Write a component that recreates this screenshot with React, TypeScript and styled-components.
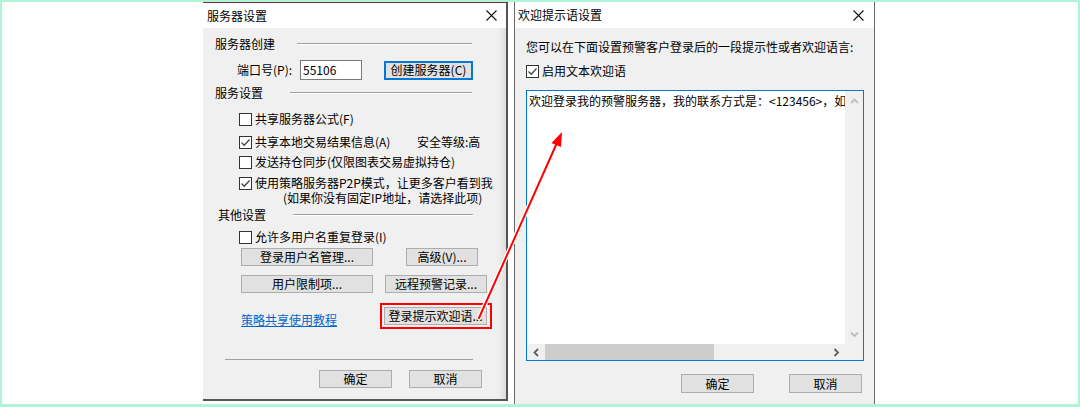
import styled, { createGlobalStyle } from "styled-components";

const GlobalStyle = createGlobalStyle`
  html, body {
    margin: 0;
    padding: 0;
    background: #ffffff;
  }
  body {
    font-family: "Noto Sans CJK SC", "Noto Sans", sans-serif;
    font-size: 12px;
    color: #000;
  }
`;

const Frame = styled.div`
  position: relative;
  width: 1080px;
  height: 407px;
  box-sizing: border-box;
  border: 2px solid #aef4d6;
  border-bottom-width: 3px;
  background: #ffffff;
  display: flex;
  align-items: flex-start;
  gap: 6px;
  padding-left: 201px;
  overflow: hidden;
`;

const Dialog = styled.div<{ $w: number; $h: number; $side: "left" | "right" }>`
  width: ${(p) => p.$w}px;
  height: ${(p) => p.$h}px;
  box-sizing: border-box;
  display: flex;
  flex-direction: column;
  background: #f0f0f0;
  ${(p) =>
    p.$side === "left"
      ? `
    border-top: 1px solid #7b2d2d;
    border-right: 2px solid #555;
    border-bottom: 2px solid #555;
    box-shadow: inset -8px 0 8px -6px rgba(0, 0, 0, 0.12);
  `
      : `
    border-left: 1px solid #6a6a6a;
    border-right: 1px solid #6a6a6a;
  `}
`;

const TitleBar = styled.div<{ $h: number; $pl: number; $pr: number }>`
  height: ${(p) => p.$h}px;
  flex: none;
  background: #ffffff;
  display: flex;
  align-items: center;
  justify-content: space-between;
  padding: 0 ${(p) => p.$pr}px 0 ${(p) => p.$pl}px;
  line-height: 16px;
  font-size: 12px;
`;

const Body = styled.div`
  flex: 1;
  display: flex;
  flex-direction: column;
`;

const Row = styled.div<{ $mt: number; $ml: number; $h?: number; $align?: string }>`
  display: flex;
  align-items: ${(p) => p.$align || "center"};
  margin-top: ${(p) => p.$mt}px;
  margin-left: ${(p) => p.$ml}px;
  height: ${(p) => p.$h || 16}px;
  line-height: 16px;
  white-space: nowrap;
`;

const GroupLabel = styled.span<{ $w: number }>`
  width: ${(p) => p.$w}px;
  flex: none;
`;

const GroupLine = styled.span<{ $w: number }>`
  width: ${(p) => p.$w}px;
  height: 0;
  border-top: 1px solid #a0a0a0;
  border-bottom: 1px solid #ffffff;
`;

const Text = styled.span<{ $w?: number; $ml?: number }>`
  ${(p) => (p.$w ? `width: ${p.$w}px; flex: none;` : "")}
  margin-left: ${(p) => p.$ml || 0}px;
`;

const Box = styled.span`
  width: 13px;
  height: 13px;
  box-sizing: border-box;
  border: 1px solid #333;
  background: #fff;
  flex: none;
  display: flex;
  align-items: center;
  justify-content: center;
  margin-right: 3px;
`;

const Input = styled.div`
  width: 62px;
  height: 20px;
  box-sizing: border-box;
  border: 1px solid #7a7a7a;
  background: #fff;
  padding-left: 2px;
  line-height: 18px;
`;

const Button = styled.div<{ $w: number; $h?: number; $ml?: number; $primary?: boolean }>`
  width: ${(p) => p.$w}px;
  height: ${(p) => p.$h || 18}px;
  margin-left: ${(p) => p.$ml || 0}px;
  box-sizing: border-box;
  flex: none;
  background: #e1e1e1;
  border: ${(p) => (p.$primary ? "2px solid #0078d7" : "1px solid #adadad")};
  display: flex;
  align-items: center;
  justify-content: center;
  line-height: 16px;
  white-space: nowrap;
`;

const Highlight = styled.div<{ $ml: number }>`
  margin-left: ${(p) => p.$ml}px;
  border: 2px solid #ff0000;
  padding: 2px 3px 2px 2px;
`;

const Link = styled.span`
  color: #0066cc;
  text-decoration: underline;
  margin-bottom: 1px;
`;

const Separator = styled.div`
  margin: 30px 0 0 22px;
  width: 248px;
  border-top: 1px solid #a0a0a0;
`;

const EditBox = styled.div`
  margin: 11px 0 0 11px;
  width: 338px;
  height: 271px;
  box-sizing: border-box;
  border: 1px solid #0078d7;
  background: #fff;
  display: grid;
  grid-template-columns: minmax(0, 1fr) 18px;
  grid-template-rows: minmax(0, 1fr) 16px;
`;

const EditText = styled.div`
  grid-column: 1;
  grid-row: 1;
  padding: 2px 0 0 2px;
  line-height: 16px;
  white-space: nowrap;
  overflow: hidden;
`;

const VScroll = styled.div`
  grid-column: 2;
  grid-row: 1 / span 2;
  background: #f0f0f0;
  display: flex;
  flex-direction: column;
  justify-content: space-between;
`;

const HScroll = styled.div`
  grid-column: 1;
  grid-row: 2;
  background: #f0f0f0;
  display: flex;
  align-items: stretch;
`;

const ArrowCell = styled.div<{ $w: number; $h: number }>`
  width: ${(p) => p.$w}px;
  height: ${(p) => p.$h}px;
  flex: none;
  display: flex;
  align-items: center;
  justify-content: center;
`;

const Thumb = styled.div<{ $w: number }>`
  width: ${(p) => p.$w}px;
  background: #cdcdcd;
`;

const Spacer = styled.span`
  flex: 1;
`;

const Overlay = styled.svg`
  position: absolute;
  left: -2px;
  top: -2px;
  pointer-events: none;
`;

const CloseIcon = () => (
  <svg width="11" height="11" viewBox="0 0 11 11">
    <path d="M0.5 0.5 L10.5 10.5 M10.5 0.5 L0.5 10.5" stroke="#111" strokeWidth="1.1" fill="none" />
  </svg>
);

const Check = ({ on }: { on?: boolean }) => (
  <Box>
    {on && (
      <svg width="11" height="11" viewBox="0 0 11 11">
        <path d="M1.5 5.5 L4.2 8.2 L9.5 2.5" stroke="#444" strokeWidth="1.3" fill="none" />
      </svg>
    )}
  </Box>
);

const Chevron = ({ dir, color }: { dir: "up" | "down" | "left" | "right"; color: string }) => {
  const d = {
    up: "M1 6 L4.5 2.5 L8 6",
    down: "M1 2.5 L4.5 6 L8 2.5",
    left: "M6 1 L2.5 4.5 L6 8",
    right: "M2.5 1 L6 4.5 L2.5 8",
  }[dir];
  return (
    <svg width="9" height="9" viewBox="0 0 9 9">
      <path d={d} stroke={color} strokeWidth="1.8" fill="none" />
    </svg>
  );
};

const ServerDialog = () => (
  <Dialog $w={305} $h={399} $side="left">
    <TitleBar $h={25} $pl={4} $pr={9}>
      <span>服务器设置</span>
      <CloseIcon />
    </TitleBar>
    <Body>
      <Row $mt={8} $ml={12}>
        <GroupLabel $w={82}>服务器创建</GroupLabel>
        <GroupLine $w={175} />
      </Row>
      <Row $mt={8} $ml={34} $h={20}>
        <Text $w={63}>端口号(P):</Text>
        <Input>55106</Input>
        <Button $w={89} $ml={22} $h={19} $primary>
          创建服务器(C)
        </Button>
      </Row>
      <Row $mt={5} $ml={12}>
        <GroupLabel $w={75}>服务设置</GroupLabel>
        <GroupLine $w={182} />
      </Row>
      <Row $mt={10} $ml={36}>
        <Check />
        <Text>共享服务器公式(F)</Text>
      </Row>
      <Row $mt={7} $ml={36}>
        <Check on />
        <Text $w={162}>共享本地交易结果信息(A)</Text>
        <Text>安全等级:高</Text>
      </Row>
      <Row $mt={4} $ml={36}>
        <Check />
        <Text>发送持仓同步(仅限图表交易虚拟持仓)</Text>
      </Row>
      <Row $mt={5} $ml={36}>
        <Check on />
        <Text>使用策略服务器P2P模式，让更多客户看到我</Text>
      </Row>
      <Row $mt={0} $ml={80} $h={14}>
        <Text>(如果你没有固定IP地址，请选择此项)</Text>
      </Row>
      <Row $mt={2} $ml={15}>
        <GroupLabel $w={75}>其他设置</GroupLabel>
        <GroupLine $w={180} />
      </Row>
      <Row $mt={6} $ml={36}>
        <Check />
        <Text>允许多用户名重复登录(I)</Text>
      </Row>
      <Row $mt={3} $ml={38} $h={18}>
        <Button $w={132}>登录用户名管理...</Button>
        <Button $w={72} $ml={33}>
          高级(V)...
        </Button>
      </Row>
      <Row $mt={9} $ml={38} $h={18}>
        <Button $w={132}>用户限制项...</Button>
        <Button $w={102} $ml={12}>
          远程预警记录...
        </Button>
      </Row>
      <Row $mt={10} $ml={38} $h={26} $align="flex-end">
        <Link>策略共享使用教程</Link>
        <Highlight $ml={43}>
          <Button $w={103}>登录提示欢迎语...</Button>
        </Highlight>
      </Row>
      <Separator />
      <Row $mt={10} $ml={116} $h={18}>
        <Button $w={73}>确定</Button>
        <Button $w={73} $ml={17}>
          取消
        </Button>
      </Row>
    </Body>
  </Dialog>
);

const WelcomeDialog = () => (
  <Dialog $w={361} $h={402} $side="right">
    <TitleBar $h={26} $pl={3} $pr={10}>
      <span>欢迎提示语设置</span>
      <CloseIcon />
    </TitleBar>
    <Body>
      <Row $mt={11} $ml={11}>
        <Text>您可以在下面设置预警客户登录后的一段提示性或者欢迎语言:</Text>
      </Row>
      <Row $mt={8} $ml={11}>
        <Check on />
        <Text>启用文本欢迎语</Text>
      </Row>
      <EditBox>
        <EditText>欢迎登录我的预警服务器，我的联系方式是：&lt;123456&gt;，如</EditText>
        <VScroll>
          <ArrowCell $w={18} $h={20}>
            <Chevron dir="up" color="#bdbdbd" />
          </ArrowCell>
          <Spacer />
          <ArrowCell $w={18} $h={20}>
            <Chevron dir="down" color="#bdbdbd" />
          </ArrowCell>
          <ArrowCell $w={18} $h={16} />
        </VScroll>
        <HScroll>
          <ArrowCell $w={18} $h={16}>
            <Chevron dir="left" color="#606060" />
          </ArrowCell>
          <Thumb $w={169} />
          <Spacer />
          <ArrowCell $w={17} $h={16}>
            <Chevron dir="right" color="#606060" />
          </ArrowCell>
        </HScroll>
      </EditBox>
      <Row $mt={13} $ml={166} $h={19}>
        <Button $w={73} $h={19}>
          确定
        </Button>
        <Button $w={73} $h={19} $ml={35}>
          取消
        </Button>
      </Row>
    </Body>
  </Dialog>
);

const Annotation = () => (
  <Overlay width="1080" height="407" viewBox="0 0 1080 407">
    <g strokeLinecap="round" strokeLinejoin="round">
      <line x1="479" y1="318" x2="556" y2="145" stroke="#fff" strokeWidth="4.5" />
      <polygon points="562,132 561,147 551.5,143" fill="#fff" stroke="#fff" strokeWidth="3" />
      <line x1="479" y1="318" x2="556" y2="145" stroke="#ff0000" strokeWidth="2" />
      <polygon points="562,132 561,147 551.5,143" fill="#ff0000" />
    </g>
  </Overlay>
);

export default function App() {
  return (
    <>
      <GlobalStyle />
      <Frame>
        <ServerDialog />
        <WelcomeDialog />
        <Annotation />
      </Frame>
    </>
  );
}
